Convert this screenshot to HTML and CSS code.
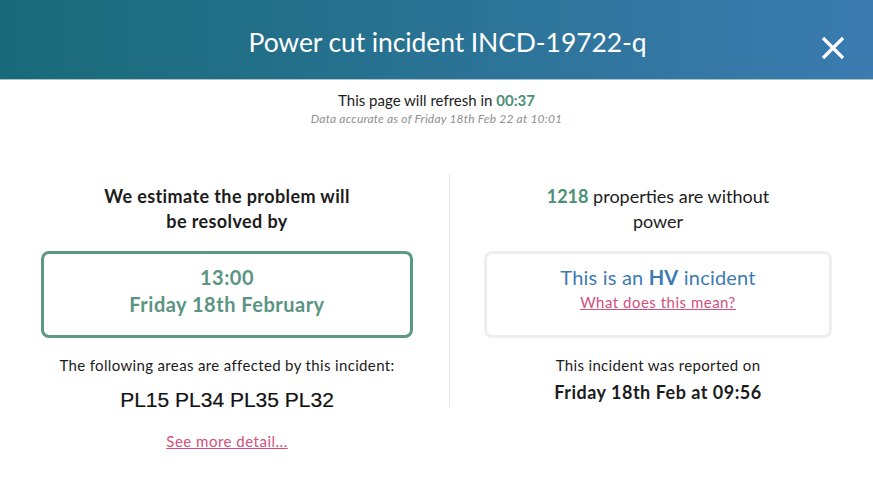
FILE: index.html
```html
<!DOCTYPE html>
<html lang="en">
<head>
<meta charset="utf-8">
<title>Power cut incident INCD-19722-q</title>
<link rel="stylesheet" href="styles.css">
</head>
<body>

<header class="modal-header">
	<h1 class="modal-title">Power cut incident INCD-19722-q</h1>
	<button class="close-btn" aria-label="Close">
		<svg width="24" height="24" viewBox="0 0 24 24"><path d="M2 2 L22 22 M22 2 L2 22" stroke="#fff" stroke-width="3.2" stroke-linecap="butt"/></svg>
	</button>
</header>

<div class="refresh">
	<p class="refresh-line">This page will refresh in <span class="countdown">00:37</span></p>
	<p class="accurate">Data accurate as of Friday 18th Feb 22 at 10:01</p>
</div>

<main class="columns">
	<section class="col col-left">
		<h2 class="col-heading strong">We estimate the problem will<br>be resolved by</h2>
		<div class="box box-green">
			<div class="box-line">13:00</div>
			<div class="box-line">Friday 18th February</div>
		</div>
		<p class="small-text">The following areas are affected by this incident:</p>
		<p class="postcodes">PL15 PL34 PL35 PL32</p>
		<a class="link" href="#">See more detail...</a>
	</section>

	<section class="col col-right">
		<h2 class="col-heading"><span class="count">1218</span> properties are without<br>power</h2>
		<div class="box box-grey">
			<div class="box-line blue">This is an <b>HV</b> incident</div>
			<a class="link" href="#">What does this mean?</a>
		</div>
		<p class="small-text">This incident was reported on</p>
		<p class="reported">Friday 18th Feb at 09:56</p>
	</section>
</main>

</body>
</html>
```

FILE: styles.css
```css
body {
	margin: 0;
	background: #fff;
	font-family: Lato, "Noto Sans", sans-serif;
	color: #1c1c1c;
}

p { margin: 0; }

.modal-header {
	position: relative;
	height: 79px;
	border-bottom: 1px solid #a9c3c9;
	background: linear-gradient(to right, #186a78, #3b7bb0);
	display: flex;
	align-items: center;
	justify-content: center;
}

.modal-title {
	margin: 0;
	color: #fff;
	font-weight: normal;
	font-size: 26.5px;
	letter-spacing: -0.1px;
	padding-left: 22px;
	padding-top: 4px;
}

.close-btn {
	position: absolute;
	right: 28px;
	top: 36px;
	width: 24px;
	height: 24px;
	padding: 0;
	border: none;
	background: transparent;
}

.refresh {
	text-align: center;
	padding-top: 10px;
}

.refresh-line {
	font-size: 15px;
	line-height: 20px;
}

.countdown {
	color: #4a9078;
	font-weight: bold;
}

.accurate {
	font-size: 12px;
	font-style: italic;
	color: #8f8f8f;
	line-height: 18px;
	letter-spacing: 0.2px;
}

.columns {
	display: flex;
	margin-top: 46px;
}

.col {
	display: flex;
	flex-direction: column;
	align-items: center;
	text-align: center;
	padding-top: 10px;
}

.col-left {
	width: 372px;
	padding-left: 41px;
	padding-right: 36px;
	padding-bottom: 14px;
}

.col-right {
	width: 348px;
	padding-left: 34px;
	padding-right: 41px;
	border-left: 1px solid #e6e6e6;
	height: 223px;
}

.col-heading {
	margin: 0;
	font-size: 18px;
	line-height: 25px;
	font-weight: normal;
	letter-spacing: 0;
}

.col-heading.strong {
	font-weight: bold;
	letter-spacing: 0.4px;
}

.count {
	color: #4a9078;
	font-weight: bold;
}

.box {
	box-sizing: border-box;
	width: 100%;
	height: 87px;
	margin-top: 17px;
	border-radius: 8px;
	padding-top: 10px;
}

.box-green {
	border: 3px solid #5a9a82;
	color: #5a9482;
}

.box-grey {
	border: 3px solid #eeeeee;
}

.box-line {
	font-size: 20px;
	line-height: 27px;
	font-weight: bold;
	letter-spacing: 0.5px;
}

.box-line.blue {
	color: #3d7bb0;
	font-weight: normal;
	letter-spacing: 0.2px;
}

.box-line.blue b { font-weight: bold; }

.link {
	color: #d2507a;
	font-size: 15px;
	line-height: 22px;
	letter-spacing: 0.5px;
	text-decoration: underline;
}

.small-text {
	font-size: 15px;
	line-height: 20px;
	margin-top: 17px;
	letter-spacing: 0.35px;
}

.postcodes {
	font-family: "Liberation Sans", Arial, sans-serif;
	font-size: 21px;
	line-height: 30px;
	margin-top: 10px;
	margin-bottom: 15px;
	color: #111;
	-webkit-text-stroke: 0.2px #111;
}

.reported {
	font-size: 18px;
	font-weight: bold;
	line-height: 24px;
	margin-top: 5px;
	letter-spacing: 0.5px;
}
```
